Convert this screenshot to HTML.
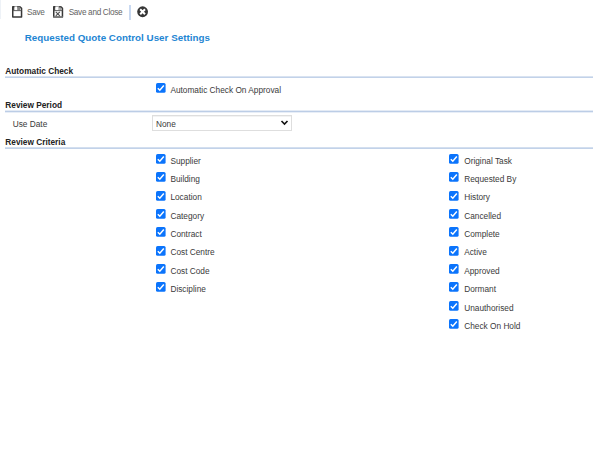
<!DOCTYPE html>
<html><head><meta charset="utf-8">
<style>
html,body{margin:0;padding:0;background:#fff;width:600px;height:449px;overflow:hidden;position:relative}
body{font-family:"Liberation Sans",sans-serif;color:#333}
.a{position:absolute;line-height:1;white-space:nowrap}
.tb{font-size:8.2px;color:#636363;letter-spacing:-0.3px}
.title{font-size:9.8px;font-weight:bold;color:#1f86d3;letter-spacing:0.02px}
.hd{font-size:8.3px;font-weight:bold;color:#222}
.ln{position:absolute;left:5px;width:588px;height:2px;background:#cad8ec}
.lb{font-size:8.3px;color:#3a3a3a}
.cb{position:absolute;width:10px;height:10px}
</style></head><body>
<!-- toolbar -->
<div class="a" style="left:0;top:0;width:1px;height:19px;background:#eef2f7"></div>
<svg class="a" style="left:11.8px;top:5.8px" width="11" height="12" viewBox="0 0 11 12">
  <path d="M0.75,0.75 H7.9 L9.55,2.4 V11.05 H0.75 Z" stroke="#383838" stroke-width="1.5" stroke-linejoin="round" fill="#fff"/>
  <rect x="1.2" y="0.5" width="1.3" height="3.9" fill="#383838"/>
  <rect x="2.5" y="0" width="2.7" height="0.7" fill="#b0b0b0"/>
  <rect x="2.5" y="0.7" width="2.7" height="3.2" fill="#fff"/>
  <rect x="5.2" y="0.6" width="3" height="3.7" fill="#858585"/>
  <rect x="0.75" y="4.2" width="8.8" height="0.9" fill="#505050"/>
</svg>
<div class="a tb" style="left:27px;top:8.6px">Save</div>
<svg class="a" style="left:53.2px;top:5.8px" width="11" height="12" viewBox="0 0 11 12">
  <path d="M0.75,0.75 H7.9 L9.45,2.3 V10.95 H0.75 Z" stroke="#383838" stroke-width="1.5" stroke-linejoin="round" fill="#fff"/>
  <rect x="1.2" y="0.5" width="1.2" height="3.9" fill="#383838"/>
  <rect x="2.4" y="0" width="3.5" height="0.7" fill="#b0b0b0"/>
  <rect x="2.4" y="0.7" width="3.5" height="3.2" fill="#fff"/>
  <path d="M6.1,4.2 V1.3 Q6.1,0.8 6.6,0.8 H7.3 Q7.8,0.8 7.8,1.3 V4.2" stroke="#6a6a6a" stroke-width="0.9" fill="none"/>
  <rect x="0.75" y="4.2" width="8.7" height="0.9" fill="#505050"/>
  <rect x="0.4" y="10.3" width="9.4" height="1.3" fill="#8a8a8a"/>
  <path d="M2.8,5.9 L6.8,9.8 M6.8,5.9 L2.8,9.8" stroke="#505050" stroke-width="1.15"/>
</svg>
<div class="a tb" style="left:68.7px;top:8.6px">Save and Close</div>
<div class="a" style="left:129px;top:5px;width:1.5px;height:14.5px;background:#c9d9f1"></div>
<svg class="a" style="left:137px;top:6.3px" width="12" height="12" viewBox="0 0 12 12">
  <circle cx="5.6" cy="5.75" r="5.4" fill="#363636"/>
  <path d="M3.2,3.3 L8,8.2 M8,3.3 L3.2,8.2" stroke="#fff" stroke-width="2"/>
</svg>

<div class="a title" style="left:24.7px;top:32.9px">Requested Quote Control User Settings</div>

<div class="a hd" style="left:5.3px;top:66.7px">Automatic Check</div>
<div class="ln" style="top:76px;height:2px;background:linear-gradient(#d9e3f1 0,#d9e3f1 1px,#c2d2e9 1px,#c2d2e9 2px)"></div>
<svg class="cb" style="left:156px;top:83px" viewBox="0 0 10 10"><rect x="0" y="0" width="9.6" height="9.8" rx="1.6" fill="#0b74fc"/><path d="M1.8,5.3 L3.8,7.2 L7.8,2.6" stroke="#fff" stroke-width="1.5" fill="none"/></svg>
<div class="a lb" style="left:170.4px;top:85.9px">Automatic Check On Approval</div>

<div class="a hd" style="left:5.3px;top:101px">Review Period</div>
<div class="ln" style="top:110px;height:3px;background:linear-gradient(#e4ebf5 0,#e4ebf5 1px,#bccde6 1px,#bccde6 2px,#e8eef7 2px,#e8eef7 3px)"></div>
<div class="a lb" style="left:12.7px;top:120px">Use Date</div>
<div class="a" style="left:152px;top:115px;width:138px;height:14px;border:1px solid #dedede;box-shadow:inset 0 0.6px 0 #e8e8e8;background:#fff"></div>
<div class="a lb" style="left:156px;top:120px">None</div>
<svg class="a" style="left:280px;top:119px" width="10" height="8" viewBox="0 0 10 8"><path d="M1.5,2 L4.5,5 L7.5,2" stroke="#111" stroke-width="1.6" fill="none"/></svg>

<div class="a hd" style="left:5.3px;top:137.7px">Review Criteria</div>
<div class="ln" style="top:147px;height:2px;background:linear-gradient(#d3dfef 0,#d3dfef 1px,#c2d2e9 1px,#c2d2e9 2px)"></div>

<svg class="cb" style="left:156px;top:154.0px" viewBox="0 0 10 10"><rect x="0" y="0" width="9.6" height="9.8" rx="1.6" fill="#0b74fc"/><path d="M1.8,5.3 L3.8,7.2 L7.8,2.6" stroke="#fff" stroke-width="1.5" fill="none"/></svg>
<div class="a lb" style="left:170.4px;top:156.7px">Supplier</div>
<svg class="cb" style="left:156px;top:172.35px" viewBox="0 0 10 10"><rect x="0" y="0" width="9.6" height="9.8" rx="1.6" fill="#0b74fc"/><path d="M1.8,5.3 L3.8,7.2 L7.8,2.6" stroke="#fff" stroke-width="1.5" fill="none"/></svg>
<div class="a lb" style="left:170.4px;top:175.05px">Building</div>
<svg class="cb" style="left:156px;top:190.7px" viewBox="0 0 10 10"><rect x="0" y="0" width="9.6" height="9.8" rx="1.6" fill="#0b74fc"/><path d="M1.8,5.3 L3.8,7.2 L7.8,2.6" stroke="#fff" stroke-width="1.5" fill="none"/></svg>
<div class="a lb" style="left:170.4px;top:193.4px">Location</div>
<svg class="cb" style="left:156px;top:209.05px" viewBox="0 0 10 10"><rect x="0" y="0" width="9.6" height="9.8" rx="1.6" fill="#0b74fc"/><path d="M1.8,5.3 L3.8,7.2 L7.8,2.6" stroke="#fff" stroke-width="1.5" fill="none"/></svg>
<div class="a lb" style="left:170.4px;top:211.75px">Category</div>
<svg class="cb" style="left:156px;top:227.4px" viewBox="0 0 10 10"><rect x="0" y="0" width="9.6" height="9.8" rx="1.6" fill="#0b74fc"/><path d="M1.8,5.3 L3.8,7.2 L7.8,2.6" stroke="#fff" stroke-width="1.5" fill="none"/></svg>
<div class="a lb" style="left:170.4px;top:230.1px">Contract</div>
<svg class="cb" style="left:156px;top:245.75px" viewBox="0 0 10 10"><rect x="0" y="0" width="9.6" height="9.8" rx="1.6" fill="#0b74fc"/><path d="M1.8,5.3 L3.8,7.2 L7.8,2.6" stroke="#fff" stroke-width="1.5" fill="none"/></svg>
<div class="a lb" style="left:170.4px;top:248.45px">Cost Centre</div>
<svg class="cb" style="left:156px;top:264.1px" viewBox="0 0 10 10"><rect x="0" y="0" width="9.6" height="9.8" rx="1.6" fill="#0b74fc"/><path d="M1.8,5.3 L3.8,7.2 L7.8,2.6" stroke="#fff" stroke-width="1.5" fill="none"/></svg>
<div class="a lb" style="left:170.4px;top:266.8px">Cost Code</div>
<svg class="cb" style="left:156px;top:282.45px" viewBox="0 0 10 10"><rect x="0" y="0" width="9.6" height="9.8" rx="1.6" fill="#0b74fc"/><path d="M1.8,5.3 L3.8,7.2 L7.8,2.6" stroke="#fff" stroke-width="1.5" fill="none"/></svg>
<div class="a lb" style="left:170.4px;top:285.15px">Discipline</div>
<svg class="cb" style="left:449.2px;top:154.0px" viewBox="0 0 10 10"><rect x="0" y="0" width="9.6" height="9.8" rx="1.6" fill="#0b74fc"/><path d="M1.8,5.3 L3.8,7.2 L7.8,2.6" stroke="#fff" stroke-width="1.5" fill="none"/></svg>
<div class="a lb" style="left:464.2px;top:156.7px">Original Task</div>
<svg class="cb" style="left:449.2px;top:172.35px" viewBox="0 0 10 10"><rect x="0" y="0" width="9.6" height="9.8" rx="1.6" fill="#0b74fc"/><path d="M1.8,5.3 L3.8,7.2 L7.8,2.6" stroke="#fff" stroke-width="1.5" fill="none"/></svg>
<div class="a lb" style="left:464.2px;top:175.05px">Requested By</div>
<svg class="cb" style="left:449.2px;top:190.7px" viewBox="0 0 10 10"><rect x="0" y="0" width="9.6" height="9.8" rx="1.6" fill="#0b74fc"/><path d="M1.8,5.3 L3.8,7.2 L7.8,2.6" stroke="#fff" stroke-width="1.5" fill="none"/></svg>
<div class="a lb" style="left:464.2px;top:193.4px">History</div>
<svg class="cb" style="left:449.2px;top:209.05px" viewBox="0 0 10 10"><rect x="0" y="0" width="9.6" height="9.8" rx="1.6" fill="#0b74fc"/><path d="M1.8,5.3 L3.8,7.2 L7.8,2.6" stroke="#fff" stroke-width="1.5" fill="none"/></svg>
<div class="a lb" style="left:464.2px;top:211.75px">Cancelled</div>
<svg class="cb" style="left:449.2px;top:227.4px" viewBox="0 0 10 10"><rect x="0" y="0" width="9.6" height="9.8" rx="1.6" fill="#0b74fc"/><path d="M1.8,5.3 L3.8,7.2 L7.8,2.6" stroke="#fff" stroke-width="1.5" fill="none"/></svg>
<div class="a lb" style="left:464.2px;top:230.1px">Complete</div>
<svg class="cb" style="left:449.2px;top:245.75px" viewBox="0 0 10 10"><rect x="0" y="0" width="9.6" height="9.8" rx="1.6" fill="#0b74fc"/><path d="M1.8,5.3 L3.8,7.2 L7.8,2.6" stroke="#fff" stroke-width="1.5" fill="none"/></svg>
<div class="a lb" style="left:464.2px;top:248.45px">Active</div>
<svg class="cb" style="left:449.2px;top:264.1px" viewBox="0 0 10 10"><rect x="0" y="0" width="9.6" height="9.8" rx="1.6" fill="#0b74fc"/><path d="M1.8,5.3 L3.8,7.2 L7.8,2.6" stroke="#fff" stroke-width="1.5" fill="none"/></svg>
<div class="a lb" style="left:464.2px;top:266.8px">Approved</div>
<svg class="cb" style="left:449.2px;top:282.45px" viewBox="0 0 10 10"><rect x="0" y="0" width="9.6" height="9.8" rx="1.6" fill="#0b74fc"/><path d="M1.8,5.3 L3.8,7.2 L7.8,2.6" stroke="#fff" stroke-width="1.5" fill="none"/></svg>
<div class="a lb" style="left:464.2px;top:285.15px">Dormant</div>
<svg class="cb" style="left:449.2px;top:300.8px" viewBox="0 0 10 10"><rect x="0" y="0" width="9.6" height="9.8" rx="1.6" fill="#0b74fc"/><path d="M1.8,5.3 L3.8,7.2 L7.8,2.6" stroke="#fff" stroke-width="1.5" fill="none"/></svg>
<div class="a lb" style="left:464.2px;top:303.5px">Unauthorised</div>
<svg class="cb" style="left:449.2px;top:319.15px" viewBox="0 0 10 10"><rect x="0" y="0" width="9.6" height="9.8" rx="1.6" fill="#0b74fc"/><path d="M1.8,5.3 L3.8,7.2 L7.8,2.6" stroke="#fff" stroke-width="1.5" fill="none"/></svg>
<div class="a lb" style="left:464.2px;top:321.85px">Check On Hold</div>
</body></html>
